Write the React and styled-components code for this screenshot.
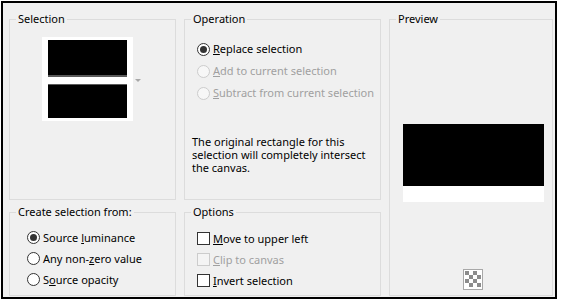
import React from "react";
import styled, { createGlobalStyle } from "styled-components";

const Global = createGlobalStyle`
  html, body {
    margin: 0;
    padding: 0;
    background: #fff;
  }
  body {
    font-family: "Noto Sans", "Open Sans", sans-serif;
    font-size: 11px;
    color: #000;
  }
`;

const Frame = styled.div`
  box-sizing: border-box;
  margin: 1px 0 0 1px;
  width: 556px;
  height: 298px;
  border: 2px solid #000;
  background: #f0f0f0;
`;

const Layout = styled.div`
  display: grid;
  grid-template-columns: 167px 197px 164px;
  grid-template-rows: 188px 91px;
  grid-template-areas:
    "sel op prev"
    "create opts prev";
  column-gap: 8px;
  row-gap: 5px;
  padding: 9px 0 0 6px;
`;

const Group = styled.fieldset`
  grid-area: ${(p) => p.$area};
  margin: 0;
  padding: 0;
  min-width: 0;
  border: 1px solid #dcdcdc;
  box-sizing: border-box;
`;

const Legend = styled.legend`
  margin-left: 6px;
  padding: 0 2px;
  font-size: 11px;
  line-height: 14px;
  color: #000;
`;

const Body = styled.div`
  display: flex;
  flex-direction: column;
  align-items: ${(p) => p.$align || "stretch"};
  padding: ${(p) => p.$pad};
`;

const ThumbRow = styled.div`
  display: flex;
  align-items: center;
  justify-content: center;
  gap: 2px;
  padding-right: 2px;
`;

const Thumb = styled.div`
  box-sizing: border-box;
  width: 91px;
  height: 84px;
  padding: 3px 6px;
  background: #fff;
  display: flex;
  flex-direction: column;
  gap: 7px;
`;

const Bar = styled.div`
  height: ${(p) => p.$h}px;
  background: #000;
  border-${(p) => p.$edge}: ${(p) => p.$edgeW}px solid #5a5a5a;
`;

const Caret = styled.span`
  width: 0;
  height: 0;
  border-left: 3px solid transparent;
  border-right: 3px solid transparent;
  border-top: 3px solid #a8a8a8;
  margin-top: 2px;
`;

const Choice = styled.label`
  display: flex;
  align-items: center;
  gap: 3px;
  height: ${(p) => p.$h}px;
  color: ${(p) => (p.$disabled ? "#a0a0a0" : "#000")};
  line-height: 14px;
  white-space: nowrap;
`;

const RadioMark = styled.span`
  box-sizing: border-box;
  flex: none;
  width: 13px;
  height: 13px;
  border-radius: 50%;
  border: 1px solid ${(p) => (p.$disabled ? "#cccccc" : "#333")};
  background: ${(p) => (p.$disabled ? "#f7f7f7" : "#fff")};
  display: grid;
  place-items: center;
  &::after {
    content: "";
    display: ${(p) => (p.$checked ? "block" : "none")};
    width: 7px;
    height: 7px;
    border-radius: 50%;
    background: #333;
  }
`;

const CheckMark = styled.span`
  box-sizing: border-box;
  flex: none;
  width: 13px;
  height: 13px;
  border: 1px solid ${(p) => (p.$disabled ? "#cccccc" : "#333")};
  background: ${(p) => (p.$disabled ? "#f4f4f4" : "#fff")};
`;

const ChoiceList = styled.div`
  display: flex;
  flex-direction: column;
  margin-left: ${(p) => p.$indent || 0}px;
`;

const Note = styled.p`
  margin: 31px 0 0;
  width: 178px;
  line-height: 13px;
  color: #000;
`;

const PreviewImage = styled.div`
  width: 141px;
  height: 78px;
  background: #fff;
  display: flex;
  flex-direction: column;
  &::before {
    content: "";
    height: 62px;
    background: #000;
  }
`;

const CheckerIcon = styled.svg`
  margin-top: 67px;
  display: block;
`;

function Radio({ checked, disabled, h, children }) {
  return (
    <Choice $h={h} $disabled={disabled}>
      <RadioMark $checked={checked} $disabled={disabled} />
      <span>{children}</span>
    </Choice>
  );
}

function Check({ disabled, children }) {
  return (
    <Choice $h={21} $disabled={disabled}>
      <CheckMark $disabled={disabled} />
      <span>{children}</span>
    </Choice>
  );
}

function Checker() {
  const cells = [];
  for (let r = 0; r < 4; r++) {
    for (let c = 0; c < 4; c++) {
      if ((r + c) % 2 === 0) {
        cells.push(<rect key={`${r}-${c}`} x={2 + c * 4} y={2 + r * 4} width="4" height="4" fill="#8c8c8c" />);
      }
    }
  }
  return (
    <CheckerIcon width="20" height="21" viewBox="0 0 20 21">
      <rect x="0.5" y="0.5" width="19" height="20" fill="#fff" stroke="#a8a8a8" />
      <rect x="2" y="2" width="16" height="17" fill="#fff" />
      {cells}
    </CheckerIcon>
  );
}

export default function App() {
  return (
    <>
      <Global />
      <Frame>
        <Layout>
          <Group $area="sel">
            <Legend>Selection</Legend>
            <Body $pad="11px 0 0 0">
              <ThumbRow>
                <Thumb>
                  <Bar $h={37} $edge="bottom" $edgeW={2} />
                  <Bar $h={35} $edge="top" $edgeW={1} />
                </Thumb>
                <Caret />
              </ThumbRow>
            </Body>
          </Group>

          <Group $area="op">
            <Legend>Operation</Legend>
            <Body $pad="12px 7px 0 7px">
              <ChoiceList $indent={5}>
                <Radio h={22} checked>
                  <u>R</u>eplace selection
                </Radio>
                <Radio h={22} disabled>
                  <u>A</u>dd to current selection
                </Radio>
                <Radio h={22} disabled>
                  <u>S</u>ubtract from current selection
                </Radio>
              </ChoiceList>
              <Note>The original rectangle for this selection will completely intersect the canvas.</Note>
            </Body>
          </Group>

          <Group $area="prev">
            <Legend>Preview</Legend>
            <Body $pad="98px 0 0 4px" $align="center">
              <PreviewImage />
              <Checker />
            </Body>
          </Group>

          <Group $area="create">
            <Legend>Create selection from:</Legend>
            <Body $pad="8px 0 0 17px">
              <ChoiceList>
                <Radio h={21} checked>
                  Source <u>l</u>uminance
                </Radio>
                <Radio h={21}>
                  Any non-<u>z</u>ero value
                </Radio>
                <Radio h={21}>
                  S<u>o</u>urce opacity
                </Radio>
              </ChoiceList>
            </Body>
          </Group>

          <Group $area="opts">
            <Legend>Options</Legend>
            <Body $pad="9px 0 0 12px">
              <ChoiceList>
                <Check>
                  <u>M</u>ove to upper left
                </Check>
                <Check disabled>
                  <u>C</u>lip to canvas
                </Check>
                <Check>
                  <u>I</u>nvert selection
                </Check>
              </ChoiceList>
            </Body>
          </Group>
        </Layout>
      </Frame>
    </>
  );
}
